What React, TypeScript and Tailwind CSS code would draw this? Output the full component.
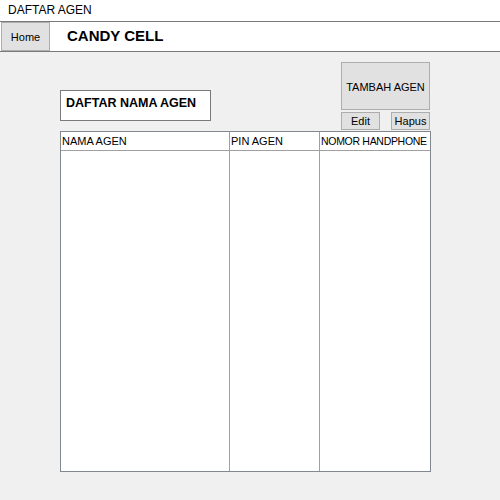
export default function App() {
  const font = { fontFamily: '"Liberation Sans", Arial, sans-serif' };
  return (
    <div
      className="w-[500px] h-[500px] bg-[#f0f0f0] flex flex-col text-black overflow-hidden"
      style={font}
    >
      <div className="h-[21px] bg-white pl-[8px] pt-[3px] text-[12px] leading-[14px]">
        DAFTAR AGEN
      </div>
      <div className="h-[31px] bg-white border-y border-[#7a7a7a] flex items-stretch">
        <button className="ml-[1px] w-[49px] bg-[#e1e1e1] border border-[#adadad] text-[11px] leading-none pt-[1px]">
          Home
        </button>
        <div className="ml-[17px] flex items-center font-bold text-[15px] pb-[1px]">
          CANDY CELL
        </div>
      </div>

      <div className="ml-[60px] mt-[10px] w-[371px] flex items-end justify-between">
        <div className="mb-[9px] w-[151px] h-[31px] bg-white border border-[#7a7a7a] pl-[5px] pt-[5px] font-bold text-[12.5px] leading-[15px]">
          DAFTAR NAMA AGEN
        </div>
        <div className="mr-[1px] w-[89px] flex flex-col gap-[2px]">
          <button className="h-[48px] bg-[#e1e1e1] border border-[#adadad] text-[11px] pt-[2px]">
            TAMBAH AGEN
          </button>
          <div className="flex justify-between">
            <button className="w-[39px] h-[18px] bg-[#e1e1e1] border border-[#adadad] text-[11px] leading-none">
              Edit
            </button>
            <button className="w-[39px] h-[18px] bg-[#e1e1e1] border border-[#adadad] text-[11px] leading-none">
              Hapus
            </button>
          </div>
        </div>
      </div>

      <div className="ml-[60px] mt-[1px] w-[371px] h-[341px] bg-white border border-[#828790] grid grid-cols-[169px_90px_1fr] grid-rows-[19px_1fr] text-[11px]">
        <div className="border-b border-r border-[#a0a0a0] pl-[1px] pt-[3px] leading-[13px]">NAMA AGEN</div>
        <div className="border-b border-r border-[#a0a0a0] pl-[1px] pt-[3px] leading-[13px]">PIN AGEN</div>
        <div className="border-b border-[#a0a0a0] pl-[1px] pt-[3px] leading-[13px] whitespace-nowrap text-[10.5px] tracking-[-0.3px]">NOMOR HANDPHONE</div>
        <div className="border-r border-[#a0a0a0]" />
        <div className="border-r border-[#a0a0a0]" />
        <div />
      </div>
    </div>
  );
}
